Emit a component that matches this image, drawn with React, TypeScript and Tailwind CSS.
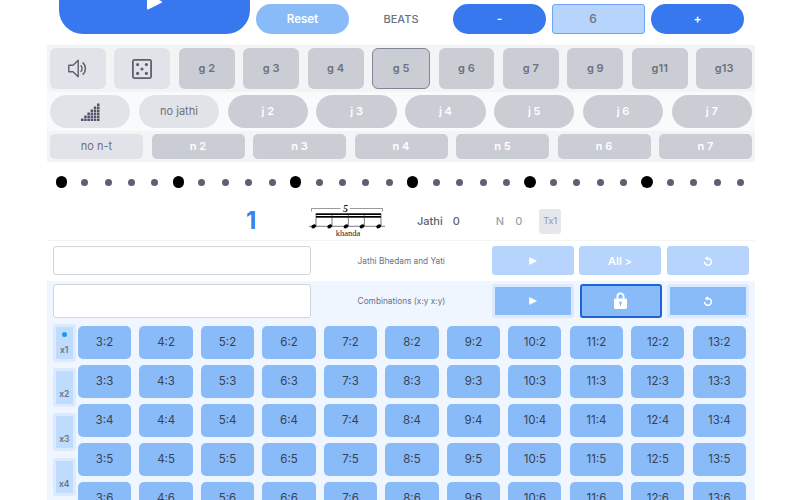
const gRow = ["g 2", "g 3", "g 4", "g 5", "g 6", "g 7", "g 9", "g11", "g13"];
const jRow = ["j 2", "j 3", "j 4", "j 5", "j 6", "j 7"];
const nRow = ["n 2", "n 3", "n 4", "n 5", "n 6", "n 7"];
const columns = [3, 4, 5, 6, 7, 8, 9, 10, 11, 12, 13];
const rows = [2, 3, 4, 5, 6];
const dots = Array.from({ length: 30 }, (_, i) => i);
const sides = ["x1", "x2", "x3", "x4"];

function PlayGlyph({ width = 10, height = 10 }: { width?: number; height?: number }) {
  return (
    <svg width={width} height={height} viewBox="0 0 10 10" fill="currentColor" stroke="currentColor" strokeWidth="1" strokeLinejoin="round">
      <path d="M0.8 0.8 L9.2 5 L0.8 9.2 Z" />
    </svg>
  );
}

function SpeakerIcon() {
  return (
    <svg width="19" height="19" viewBox="0 0 19 19" fill="none" stroke="#5b6170" strokeWidth="1.4" strokeLinejoin="round">
      <path d="M0.8 6.3 H5 L10.2 1.2 V17.8 L5 12.7 H0.8 Z" />
      <path d="M12.6 6.2 A4.4 4.4 0 0 1 12.6 12.8" />
      <path d="M14.6 3.4 A8 8 0 0 1 14.6 15.6" />
    </svg>
  );
}

function DiceIcon() {
  return (
    <svg width="20" height="20" viewBox="0 0 20 20" fill="#5b6170">
      <rect x="0.9" y="0.9" width="18.2" height="18.2" rx="1.5" fill="none" stroke="#5b6170" strokeWidth="1.8" />
      <circle cx="5.6" cy="5.6" r="1.6" />
      <circle cx="14.4" cy="5.6" r="1.6" />
      <circle cx="10" cy="10" r="1.6" />
      <circle cx="5.6" cy="14.4" r="1.6" />
      <circle cx="14.4" cy="14.4" r="1.6" />
    </svg>
  );
}

function MeterIcon() {
  const heights = [1, 2, 3, 4, 5, 6];
  return (
    <svg width="20" height="19" viewBox="0 0 20 19" fill="#50566a">
      {heights.map((h, c) =>
        Array.from({ length: h }, (_, r) => (
          <rect key={`${c}-${r}`} x={c * 3.2 + 1} y={16.5 - r * 3} width="2.5" height="2.5" />
        ))
      )}
    </svg>
  );
}

function ResetIcon() {
  return (
    <svg width="10" height="10" viewBox="0 0 10 10" fill="none" stroke="currentColor" strokeWidth="1.5">
      <path d="M3.4 2.9 A3.4 3.4 0 1 1 1.6 5.8" />
      <path d="M5 0.2 V4.6 L1.6 2.6 Z" fill="currentColor" stroke="none" />
    </svg>
  );
}

function LockIcon() {
  return (
    <svg width="13" height="17" viewBox="0 0 13 17" fill="white">
      <path d="M3.4 7 V4.4 a3.1 3.1 0 0 1 6.2 0 V7" fill="none" stroke="white" strokeWidth="1.8" />
      <rect x="0" y="6.5" width="13" height="10.5" rx="1.4" />
      <circle cx="6.5" cy="10.8" r="1.3" fill="#8abbf9" />
      <rect x="6" y="11" width="1" height="3" fill="#8abbf9" />
    </svg>
  );
}

function Notation() {
  const notes = [315, 331, 347.3, 363.3, 380];
  return (
    <svg width="78" height="32" viewBox="308 205 78 32" className="shrink-0 overflow-visible">
      <path d="M310.5 211.5 V208.5 H339.5 M349 208.5 H381.5 V211.5" fill="none" stroke="#555" strokeWidth="0.6" />
      <text x="344.5" y="211.7" textAnchor="middle" fontSize="10" fontStyle="italic" fontWeight="700" fontFamily="'Liberation Serif', serif" fill="#111">
        5
      </text>
      <rect x="315" y="213.3" width="65" height="1.7" fill="#000" />
      <rect x="315" y="216" width="65" height="1.7" fill="#000" />
      <line x1="308" x2="384" y1="226.3" y2="226.3" stroke="#222" strokeWidth="0.6" />
      {notes.map((x) => (
        <g key={x}>
          <line x1={x} x2={x} y1="213.3" y2="226" stroke="#222" strokeWidth="0.6" />
          <ellipse cx={x - 2.3} cy="226.4" rx="2.5" ry="1.9" transform={`rotate(-25 ${x - 2.3} 226.4)`} fill="#000" />
        </g>
      ))}
      <text x="347" y="235.5" textAnchor="middle" fontSize="8.5" fontFamily="'Liberation Serif', serif" fill="#222">
        khanda
      </text>
    </svg>
  );
}

export default function App() {
  return (
    <div className="flex h-[500px] w-[800px] flex-col overflow-hidden bg-white font-['Inter',sans-serif]">
      {/* top bar */}
      <div className="flex h-[33.5px] shrink-0 items-end pl-[59px]">
        <button className="flex h-[63px] w-[191px] shrink-0 items-center justify-center rounded-[24px] bg-[#3878ee] text-white">
          <PlayGlyph width={17} height={16} />
        </button>
        <button className="ml-[6px] h-[29.5px] w-[93px] rounded-full bg-[#8abbf9] pt-[1px] text-[11.5px] font-semibold text-white">Reset</button>
        <div className="w-[104px] text-center text-[11px] font-medium leading-[29px] text-[#6b7280]">BEATS</div>
        <button className="h-[29.5px] w-[93px] rounded-full bg-[#3878ee] text-[12px] font-semibold text-white">-</button>
        <div className="ml-[6px] flex h-[29.5px] w-[93px] items-center justify-center rounded-[3px] border border-[#6fa3f5] bg-[#b7d4fc] pr-[11px] text-[12px] font-medium text-[#6b7280]">6</div>
        <button className="ml-[6px] h-[29.5px] w-[93px] rounded-full bg-[#3878ee] text-[12px] font-semibold text-white">+</button>
      </div>

      {/* selector panel */}
      <div className="mx-[47px] mt-[11.5px] w-[708px] shrink-0">
        <div className="flex h-[47px] items-center gap-[8.6px] bg-[#f3f4f6] px-[3px]">
          <button className="flex h-[41.5px] flex-1 items-center justify-center rounded-md bg-[#e2e3e8]">
            <SpeakerIcon />
          </button>
          <button className="flex h-[41.5px] flex-1 items-center justify-center rounded-md bg-[#e2e3e8]">
            <DiceIcon />
          </button>
          {gRow.map((g) => (
            <button
              key={g}
              className={
                g === "g 5"
                  ? "h-[41.5px] flex-1 rounded-md border border-[#7d8596] bg-[#cbcdd4] text-[11px] font-semibold text-[#6b7280]"
                  : "h-[41.5px] flex-1 rounded-md bg-[#cbcdd4] text-[11px] font-semibold text-[#6b7280]"
              }
            >
              {g}
            </button>
          ))}
        </div>
        <div className="flex h-[39px] items-center gap-[8.5px] bg-[#f9fafb] px-[3px]">
          <button className="flex h-[33.5px] flex-1 items-center justify-center rounded-full bg-[#e2e3e8]">
            <MeterIcon />
          </button>
          <button className="h-[33.5px] flex-1 rounded-full bg-[#e2e3e8] text-[11px] text-[#6b7280]">no jathi</button>
          {jRow.map((j) => (
            <button key={j} className="h-[33.5px] flex-1 rounded-full bg-[#cbcdd4] text-[11px] font-semibold text-white">
              {j}
            </button>
          ))}
        </div>
        <div className="flex h-[30.5px] items-center gap-[8.5px] bg-[#f3f4f6] px-[3px]">
          <button className="h-[25px] flex-1 rounded-[5px] bg-[#e2e3e8] text-[11px] text-[#6b7280]">no n-t</button>
          {nRow.map((n) => (
            <button key={n} className="h-[25px] flex-1 rounded-[5px] bg-[#cbcdd4] text-[11px] font-semibold text-white">
              {n}
            </button>
          ))}
        </div>
      </div>

      {/* beat dots */}
      <div className="mx-[55.5px] flex h-[41px] w-[691px] shrink-0 items-center justify-between">
        {dots.map((d) =>
          d % 5 === 0 ? (
            <div key={d} className="h-[11.5px] w-[11.5px] rounded-full bg-black" />
          ) : (
            <div key={d} className="mx-[2.2px] h-[7px] w-[7px] rounded-full bg-[#5b6170]" />
          )
        )}
      </div>

      {/* counter row */}
      <div className="flex h-[37px] shrink-0 items-center pl-[246px]">
        <div className="w-[63px] text-[24px] font-bold leading-none text-[#3b80f0]">1</div>
        <Notation />
        <div className="ml-[30px] text-[11px] font-medium text-[#5b6170]">Jathi</div>
        <div className="ml-[10px] text-[11px] font-medium text-[#5b6170]">0</div>
        <div className="ml-[36px] text-[11px] font-medium text-[#9ca3af]">N</div>
        <div className="ml-[11px] text-[11px] font-medium text-[#9ca3af]">0</div>
        <div className="ml-[17px] flex h-[25px] w-[22px] items-center justify-center rounded-[3px] bg-[#e5e7eb] text-[9px] font-medium text-[#9ca3af]">Tx1</div>
      </div>

      {/* combinations */}
      <div className="mx-[47px] w-[708px] flex-1 border-t border-[#f3f4f6]">
        <div className="flex h-[40.5px] items-center pl-[6px] pr-[6.5px]">
          <div className="h-[29px] w-[258px] shrink-0 rounded-[3px] border border-[#d1d5db] bg-white" />
          <div className="flex-1 text-center text-[8.3px] text-[#6b7280]">Jathi Bhedam and Yati</div>
          <div className="flex gap-[5.5px]">
            <button className="flex h-[29px] w-[82px] items-center justify-center rounded-[3px] bg-[#b7d4fc] text-white">
              <PlayGlyph width={8} height={8} />
            </button>
            <button className="h-[29px] w-[82px] rounded-[3px] bg-[#b7d4fc] text-[11px] font-semibold text-white">{"All >"}</button>
            <button className="flex h-[29px] w-[82px] items-center justify-center rounded-[3px] bg-[#b7d4fc] text-white">
              <ResetIcon />
            </button>
          </div>
        </div>
        <div className="h-[220px] bg-[#eff6ff]">
          <div className="flex h-[39.5px] items-center pl-[6px] pr-[6px]">
            <div className="h-[33.5px] w-[258px] shrink-0 rounded-[3px] border border-[#d1d5db] bg-white" />
            <div className="flex-1 text-center text-[8.3px] text-[#6b7280]">Combinations (x:y x:y)</div>
            <div className="flex gap-[5.5px]">
              <button className="flex h-[33.5px] w-[82px] items-center justify-center rounded-[3px] border-[3px] border-[#dbeafe] bg-[#8abbf9] text-white">
                <PlayGlyph width={8} height={8} />
              </button>
              <button className="flex h-[33.5px] w-[82px] items-center justify-center rounded-[3px] border-2 border-[#1f63d8] bg-[#8abbf9]">
                <LockIcon />
              </button>
              <button className="flex h-[33.5px] w-[82px] items-center justify-center rounded-[3px] border-[3px] border-[#dbeafe] bg-[#8abbf9] text-white">
                <ResetIcon />
              </button>
            </div>
          </div>
          <div className="flex pl-[6px] pr-[9px] pt-[3px]">
            <div className="flex w-[22.5px] shrink-0 flex-col gap-[6.2px]">
              {sides.map((s, i) => (
                <div key={s} className="flex h-[38.5px] shrink-0 items-center justify-center rounded-[3px] border-[3px] border-[#dbeafe] bg-[#bfdbfe]">
                  <div className="relative flex h-full w-full flex-col items-center justify-end pb-[5px] text-[8.5px] font-semibold leading-none text-[#6b7280]">
                    {i === 0 && <span className="absolute top-[5px] h-[5px] w-[5px] rounded-full bg-[#1d9be9]" />}
                    {s}
                  </div>
                </div>
              ))}
            </div>
            <div className="ml-[2.5px] flex flex-1 flex-col gap-[5.7px] pt-[2.7px]">
              {rows.map((r) => (
                <div key={r} className="flex gap-[8.4px]">
                  {columns.map((c) => (
                    <button key={c} className="h-[33.3px] flex-1 rounded-[5px] bg-[#8abbf9] text-[11.5px] text-[#374151]">
                      {c}:{r}
                    </button>
                  ))}
                </div>
              ))}
            </div>
          </div>
        </div>
      </div>
    </div>
  );
}
